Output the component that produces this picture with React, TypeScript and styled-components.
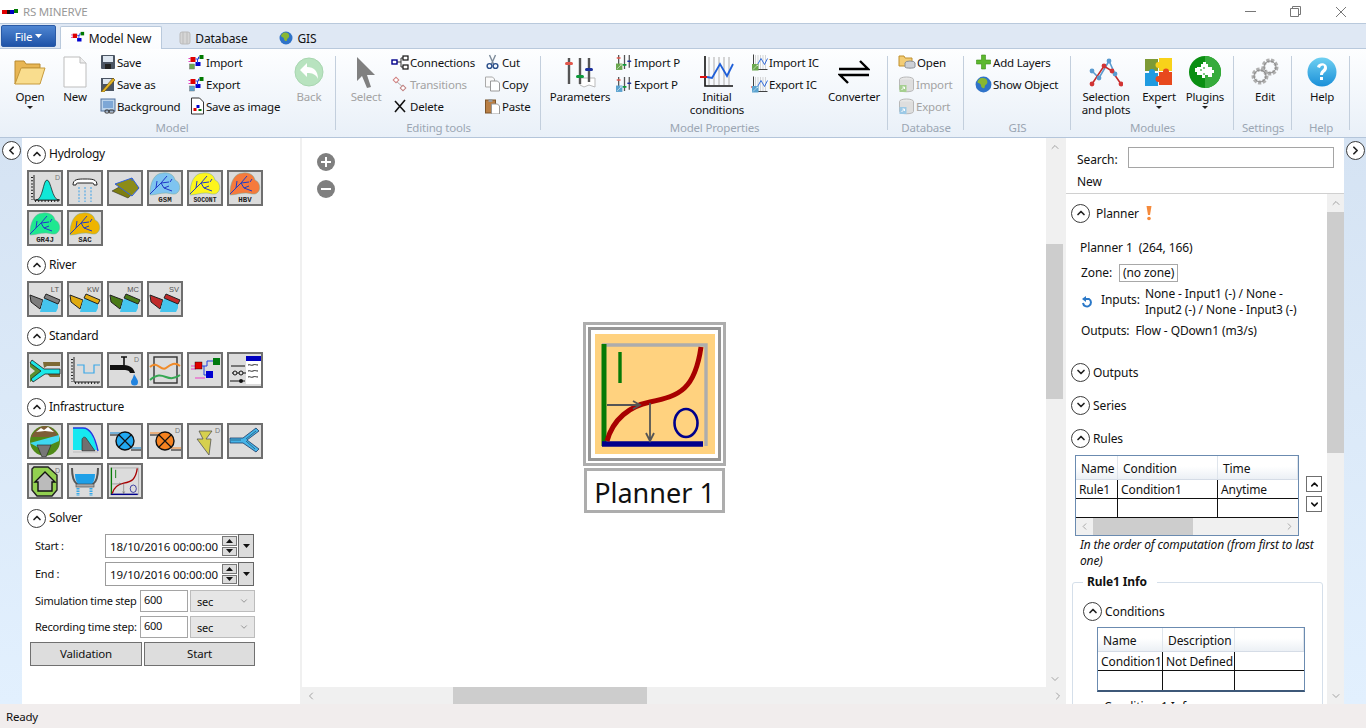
import React from 'react';
import styled, { createGlobalStyle } from 'styled-components';
import { ChevronUp, ChevronDown, ChevronLeft, ChevronRight } from 'lucide-react';

const GlobalStyle = createGlobalStyle`
  html, body { margin: 0; padding: 0; overflow: hidden; background: #fff; }
  * { box-sizing: border-box; }
  body { font-family: "Noto Sans", "Open Sans", sans-serif; font-size: 11.5px; letter-spacing: -0.2px; color: #111; }
`;

const Window = styled.div`
  width: 1366px;
  height: 728px;
  display: flex;
  flex-direction: column;
  overflow: hidden;
`;

/* title bar */
const TitleBar = styled.div`
  height: 24px;
  flex: none;
  display: flex;
  align-items: center;
  padding-left: 2px;
  background: #fff;
  border-bottom: 1px solid #b9c9dc;
`;
const AppName = styled.span`
  margin-left: 5px;
  color: #999;
`;
const WindowControls = styled.div`
  margin-left: auto;
  display: flex;
  align-items: center;
  padding-right: 19px;
  gap: 34px;
`;

/* tabs */
const TabStrip = styled.div`
  height: 24px;
  flex: none;
  display: flex;
  align-items: flex-end;
  background: #dfe8f4;
  padding-left: 1px;
`;
const FileButton = styled.div`
  width: 55px;
  height: 22px;
  align-self: flex-start;
  margin-top: 1px;
  display: flex;
  align-items: center;
  justify-content: center;
  gap: 3px;
  border-radius: 2px;
  border: 1px solid #2a5aa5;
  background: linear-gradient(#4f86d2, #1e53a8);
  color: #fff;
`;
const Tab = styled.div<{ $active?: boolean; $w: number; $ml?: number }>`
  width: ${p => p.$w}px;
  margin-left: ${p => p.$ml ?? 0}px;
  height: 23px;
  display: flex;
  align-items: center;
  justify-content: center;
  gap: 4px;
  font-size: 12px;
  letter-spacing: -0.1px;
  margin-bottom: -1px;
  position: relative;
  background: ${p => (p.$active ? 'linear-gradient(#fff, #fbfcfe)' : 'transparent')};
  border: 1px solid ${p => (p.$active ? '#b9c9dc' : 'transparent')};
  border-bottom: none;
  border-radius: 2px 2px 0 0;
`;

/* ribbon */
const Ribbon = styled.div`
  height: 90px;
  flex: none;
  display: flex;
  padding-left: 8px;
  background: linear-gradient(#fdfeff, #e9f0f8);
  border-top: 1px solid #b9c9dc;
  border-bottom: 1px solid #b4c5da;
`;
const Group = styled.div<{ $w: number }>`
  width: ${p => p.$w}px;
  flex: none;
  display: flex;
  flex-direction: column;
  position: relative;
  &::after {
    content: '';
    position: absolute;
    right: 0;
    top: 7px;
    bottom: 7px;
    width: 1px;
    background: #c3cfdd;
  }
`;
const GroupBody = styled.div`
  flex: 1;
  display: flex;
  align-items: flex-start;
`;
const GroupLabel = styled.div`
  height: 18px;
  line-height: 18px;
  text-align: center;
  color: #9ba6b3;
`;
const Large = styled.div<{ $w: number; $off?: boolean; $ml?: number }>`
  width: ${p => p.$w}px;
  margin-left: ${p => p.$ml ?? 0}px;
  flex: none;
  display: flex;
  flex-direction: column;
  align-items: center;
  padding-top: 5px;
  line-height: 13px;
  text-align: center;
  color: ${p => (p.$off ? '#a3a3a3' : '#111')};
`;
const LargeIcon = styled.div`
  height: 35px;
  margin-bottom: 1px;
  display: flex;
  align-items: center;
  justify-content: center;
`;
const Caret = styled.div`
  width: 0;
  height: 0;
  margin-top: 3px;
  border-left: 3px solid transparent;
  border-right: 3px solid transparent;
  border-top: 3px solid #222;
`;
const SmallColumn = styled.div<{ $w: number; $ml?: number }>`
  width: ${p => p.$w}px;
  margin-left: ${p => p.$ml ?? 0}px;
  flex: none;
  display: flex;
  flex-direction: column;
  padding-top: 2px;
`;
const Small = styled.div<{ $off?: boolean }>`
  height: 22px;
  display: flex;
  align-items: center;
  gap: 1px;
  white-space: nowrap;
  color: ${p => (p.$off ? '#a3a3a3' : '#111')};
`;

/* main */
const Main = styled.div`
  flex: 1;
  min-height: 0;
  display: flex;
`;
const Rail = styled.div`
  width: 22px;
  flex: none;
  padding-top: 3px;
  display: flex;
  justify-content: center;
  background: linear-gradient(#d5e3f3, #e2f0fe);
`;
const RoundButton = styled.div<{ $size?: number }>`
  width: ${p => p.$size ?? 19}px;
  height: ${p => p.$size ?? 19}px;
  flex: none;
  border-radius: 50%;
  border: 1.5px solid #3c3c3c;
  background: #fff;
  display: flex;
  align-items: center;
  justify-content: center;
  color: #222;
`;
const LeftPanel = styled.div`
  width: 278px;
  flex: none;
  padding: 6px 0 0 5px;
  background: #fff;
  overflow: hidden;
`;
const Splitter = styled.div`
  width: 2px;
  flex: none;
  background: #f0f0f0;
`;
const SectionHead = styled.div`
  height: 20px;
  display: flex;
  align-items: center;
  gap: 3px;
  margin-bottom: 6px;
  font-size: 12px;
  letter-spacing: -0.25px;
`;
const SectionTitle = styled.span`
  margin-bottom: 2px;
`;
const Tiles = styled.div`
  width: 240px;
  display: flex;
  flex-wrap: wrap;
  gap: 4px;
  margin-bottom: 9px;
`;
const Tile = styled.div`
  width: 36px;
  height: 36px;
  border: 2px solid #6f6f6f;
  background: #dcdcdc;
  display: flex;
  align-items: center;
  justify-content: center;
`;

/* solver */
const SolverRow = styled.div<{ $h: number }>`
  height: ${p => p.$h}px;
  width: 228px;
  margin-left: 8px;
  margin-bottom: 4px;
  display: flex;
  align-items: center;
  font-size: 11px;
  letter-spacing: -0.25px;
`;
const RowLabel = styled.span<{ $w: number }>`
  width: ${p => p.$w}px;
  flex: none;
  margin-bottom: 2px;
  white-space: nowrap;
`;
const DateBox = styled.div`
  width: 116px;
  height: 24px;
  flex: none;
  border: 1px solid #9c9c9c;
  border-right: none;
  display: flex;
  align-items: center;
  padding-left: 4px;
  white-space: nowrap;
  overflow: hidden;
  font-size: 11.5px;
  letter-spacing: -0.1px;
`;
const Spin = styled.div`
  width: 17px;
  height: 24px;
  flex: none;
  display: flex;
  flex-direction: column;
  gap: 1px;
  padding: 1px;
  border-top: 1px solid #9c9c9c;
  border-bottom: 1px solid #9c9c9c;
`;
const SpinPart = styled.div`
  flex: 1;
  background: #dcdcdc;
  border: 1px solid #777;
  display: flex;
  align-items: center;
  justify-content: center;
`;
const DropPart = styled.div`
  width: 16px;
  height: 24px;
  flex: none;
  background: #dcdcdc;
  border: 1px solid #666;
  display: flex;
  align-items: center;
  justify-content: center;
`;
const NumberBox = styled.div`
  width: 48px;
  height: 22px;
  flex: none;
  border: 1px solid #a5a5a5;
  padding-left: 3px;
  line-height: 18px;
`;
const UnitSelect = styled.div`
  width: 65px;
  height: 22px;
  flex: none;
  margin-left: 2px;
  border: 1px solid #bcbcbc;
  background: #e6e6e6;
  display: flex;
  align-items: center;
  justify-content: space-between;
  padding: 0 5px 0 6px;
`;
const SolverButtons = styled.div`
  display: flex;
  gap: 2px;
  margin-left: 3px;
`;
const SolverButton = styled.div<{ $w: number }>`
  width: ${p => p.$w}px;
  height: 24px;
  padding-bottom: 2px;
  border: 1px solid #707070;
  background: #dddddd;
  display: flex;
  align-items: center;
  justify-content: center;
`;

/* canvas */
const CanvasColumn = styled.div`
  width: 764px;
  flex: none;
  display: flex;
  flex-direction: column;
`;
const CanvasRow = styled.div`
  flex: 1;
  min-height: 0;
  display: flex;
`;
const Canvas = styled.div`
  flex: 1;
  position: relative;
  background: #fff;
  overflow: hidden;
`;
const ZoomButton = styled.div<{ $top: number }>`
  position: absolute;
  left: 15px;
  top: ${p => p.$top}px;
  width: 18px;
  height: 18px;
  border-radius: 50%;
  background: #7f7f7f;
  color: #fff;
  display: flex;
  align-items: center;
  justify-content: center;
`;
const NodeFrame = styled.div`
  position: absolute;
  left: 281px;
  top: 184px;
  width: 143px;
  height: 144px;
  border: 3px solid #adadad;
  padding: 2px;
`;
const NodeInner = styled.div`
  width: 100%;
  height: 100%;
  border: 3px solid #969696;
  padding: 4px 3px 3px 4px;
`;
const NodeLabel = styled.div`
  position: absolute;
  left: 282px;
  top: 330px;
  width: 141px;
  height: 45px;
  border: 3px solid #adadad;
  padding-top: 3px;
  display: flex;
  align-items: center;
  justify-content: center;
  font-size: 27px;
  letter-spacing: 0;
  white-space: nowrap;
  color: #111;
`;

/* scrollbars */
const VTrack = styled.div<{ $gutter?: number }>`
  width: ${p => 17 + (p.$gutter ?? 0)}px;
  flex: none;
  display: flex;
  flex-direction: column;
  background: #f0f0f0;
  padding-right: ${p => p.$gutter ?? 0}px;
  color: #a3a3a3;
`;
const VThumb = styled.div<{ $top: number; $h: number }>`
  width: 17px;
  height: ${p => p.$h}px;
  margin-top: ${p => p.$top}px;
  background: #cdcdcd;
`;
const BarArrow = styled.div<{ $end?: boolean }>`
  width: 17px;
  height: 17px;
  flex: none;
  margin-top: ${p => (p.$end ? 'auto' : '0')};
  display: flex;
  align-items: center;
  justify-content: center;
`;
const HTrack = styled.div<{ $h?: number }>`
  height: ${p => p.$h ?? 17}px;
  flex: none;
  display: flex;
  align-items: center;
  background: #f0f0f0;
  color: #a3a3a3;
`;
const HThumb = styled.div<{ $left: number; $w: number }>`
  width: ${p => p.$w}px;
  height: 100%;
  margin-left: ${p => p.$left}px;
  background: #cdcdcd;
`;
const HEndArrow = styled.div`
  width: 17px;
  height: 17px;
  flex: none;
  margin-left: auto;
  display: flex;
  align-items: center;
  justify-content: center;
`;

/* properties panel */
const RightPanel = styled.div`
  width: 278px;
  flex: none;
  display: flex;
  flex-direction: column;
  background: #fff;
  min-height: 0;
  font-size: 12px;
  letter-spacing: -0.1px;
`;
const PanelTop = styled.div`
  height: 56px;
  flex: none;
  padding: 9px 10px 0 11px;
  border-bottom: 1px solid #d0d0d0;
`;
const SearchRow = styled.div`
  display: flex;
  align-items: center;
  height: 21px;
  justify-content: space-between;
`;
const SearchLabel = styled.span`
  padding-top: 3px;
`;
const SearchInput = styled.div`
  width: 206px;
  height: 21px;
  border: 1px solid #a5a5a5;
`;
const NewLabel = styled.div`
  margin-top: 6px;
  line-height: 16px;
`;
const PanelBody = styled.div`
  flex: 1;
  min-height: 0;
  display: flex;
`;
const PanelScroll = styled.div`
  flex: 1;
  min-width: 0;
  overflow: hidden;
  padding: 9px 4px 0 5px;
`;
const PanelHead = styled.div<{ $mt?: number; $gap?: number }>`
  height: 20px;
  margin-top: ${p => p.$mt ?? 0}px;
  display: flex;
  align-items: center;
  gap: ${p => p.$gap ?? 5}px;
`;
const InfoLine = styled.div<{ $mt: number; $ml?: number }>`
  margin-top: ${p => p.$mt}px;
  margin-left: ${p => p.$ml ?? 9}px;
  display: flex;
  align-items: center;
  line-height: 16px;
  white-space: nowrap;
`;
const ZoneBox = styled.span`
  height: 18px;
  margin-left: 7px;
  padding: 0 3px;
  border: 1px solid #a8a8a8;
  line-height: 15px;
`;
const InputsIcon = styled.svg`
  margin-right: 8px;
`;
const InputsLabel = styled.span`
  margin-bottom: 4px;
`;
const InputsValue = styled.div`
  width: 165px;
  margin-left: 5px;
  white-space: normal;
`;
const TableRow = styled.div`
  display: flex;
  align-items: flex-start;
  margin-top: 7px;
  margin-left: 4px;
`;
const Grid = styled.div<{ $w: number; $thick?: boolean }>`
  width: ${p => p.$w}px;
  flex: none;
  border: 1px solid #6b8bb0;
  border-bottom: ${p => (p.$thick ? '2px solid #3d5878' : '1px solid #6b8bb0')};
`;
const GridRow = styled.div<{ $cols: string; $h: number; $head?: boolean }>`
  height: ${p => p.$h}px;
  display: grid;
  grid-template-columns: ${p => p.$cols};
  background: ${p => (p.$head ? 'linear-gradient(#fff, #fff 45%, #ecf0f5)' : '#fff')};
  border-bottom: 1px solid ${p => (p.$head ? '#d5dce6' : '#111')};
  &:last-child { border-bottom: none; }
`;
const HeadCell = styled.div`
  display: flex;
  align-items: center;
  padding: 1px 0 0 5px;
  border-right: 1px solid #dfe5ec;
  white-space: nowrap;
  overflow: hidden;
`;
const DataCell = styled.div`
  display: flex;
  align-items: center;
  padding-left: 3px;
  border-right: 1px solid #111;
  white-space: nowrap;
  overflow: hidden;
  &:last-child { border-right: none; }
`;
const MoveButtons = styled.div`
  margin: 21px 0 0 7px;
  display: flex;
  flex-direction: column;
  gap: 4px;
`;
const MoveButton = styled.div`
  width: 16px;
  height: 16px;
  border: 1px solid #6f6f6f;
  display: flex;
  align-items: center;
  justify-content: center;
`;
const Caption = styled.div`
  margin: 1px 6px 0 9px;
  font-style: italic;
  line-height: 16px;
  letter-spacing: -0.15px;
`;
const FieldSet = styled.fieldset`
  margin: 5px 0 0 1px;
  padding: 0 0 0 10px;
  border: 1px solid #d5dfea;
  border-radius: 3px;
  height: 160px;
`;
const Legend = styled.legend`
  margin-left: 0;
  padding: 0 10px 0 4px;
  font-weight: 700;
  line-height: 16px;
`;
const ConditionTable = styled.div`
  margin: 6px 0 0 14px;
`;
const ClippedTitle = styled.div`
  margin: 6px 0 0 21px;
`;

const StatusBar = styled.div`
  height: 24px;
  flex: none;
  display: flex;
  align-items: center;
  padding-left: 6px;
  background: #f1eded;
`;

/* ---- drawings ---- */
type IconProps = { s?: number };

const FlowMark: React.FC<{ w?: number; h?: number; badge?: string }> = ({ w = 17, h = 16, badge }) => (
  <svg width={w} height={h} viewBox="0 0 16 16">
    <rect x="0" y="4" width="2" height="1" fill="#e040c0" />
    <rect x="0" y="7" width="2" height="1" fill="#e040c0" />
    <rect x="2" y="3" width="5" height="5" fill="#e00000" />
    <rect x="7" y="8" width="5" height="4" fill="#0000d0" />
    <rect x="11" y="1" width="4" height="4" fill="#007a00" />
    <path d="M7 5h3V3h1M9 5v4" stroke="#2040e0" fill="none" />
    {badge && <rect x="1" y="10" width="5" height="5" fill={badge} stroke="#777" strokeWidth=".5" />}
  </svg>
);

const ArrowBadge: React.FC<{ x?: number; y?: number; color: string; s?: number }> = ({ x = 0, y = 0, color, s = 8 }) => (
  <g transform={`translate(${x} ${y})`}>
    <rect width={s} height={s} fill={color} />
    <path d={`M2 ${s - 2}L${s - 2} 2M${s - 4} 2h2v2`} stroke="#fff" fill="none" />
  </g>
);

const FolderLarge = () => (
  <svg width="32" height="28" viewBox="0 0 32 28">
    <path d="M1 26V3h9l2 3h14v4H8L1 26z" fill="#e8b654" stroke="#b88a30" />
    <path d="M1 26l6-16h24l-5 16z" fill="#f9dd8e" stroke="#c79a3c" />
  </svg>
);
const PageLarge = () => (
  <svg width="24" height="32" viewBox="0 0 24 32">
    <path d="M1 1h16l6 6v24H1z" fill="#fff" stroke="#bdbdbd" />
    <path d="M17 1v6h6" fill="#eee" stroke="#bdbdbd" />
  </svg>
);
const Floppy = () => (
  <svg width="16" height="16" viewBox="0 0 16 16">
    <rect x="1" y="1" width="14" height="14" rx="1" fill="#4b5563" />
    <rect x="3" y="2" width="10" height="6" fill="#dde6f0" />
    <rect x="5" y="10" width="6" height="5" fill="#222" />
  </svg>
);
const FloppyPen = () => (
  <svg width="16" height="16" viewBox="0 0 16 16">
    <rect x="1" y="2" width="13" height="13" fill="#4b5563" />
    <rect x="3" y="3" width="9" height="5" fill="#dde6f0" />
    <path d="M1 16L13 2l2 2L4 16z" fill="#e4b526" stroke="#6a4e00" strokeWidth=".6" />
  </svg>
);
const Picture = () => (
  <svg width="16" height="16" viewBox="0 0 16 16">
    <rect x="1" y="1" width="14" height="12" fill="#bcd4ec" stroke="#50719b" />
    <rect x="3" y="3" width="10" height="7" fill="#7da7d6" />
    <rect x="5" y="12" width="4" height="3" rx="1" fill="none" stroke="#333" />
    <rect x="9" y="12" width="5" height="3" rx="1" fill="none" stroke="#333" />
  </svg>
);
const ImagePage = () => (
  <svg width="17" height="18" viewBox="0 0 16 18">
    <path d="M3 1h8l4 4v12H3z" fill="#fff" stroke="#333" />
    <rect x="5" y="11" width="3" height="3" fill="#d00" />
    <rect x="8" y="8" width="3" height="3" fill="#00c" />
    <rect x="10" y="12" width="3" height="2" fill="#070" />
  </svg>
);
const BackCircle = () => (
  <svg width="30" height="30" viewBox="0 0 30 30">
    <circle cx="15" cy="15" r="14" fill="#b8e3bf" stroke="#a8d6b0" />
    <path d="M6 13l7-7v4c7 0 11 4 11 12-2-5-6-6-11-6v4z" fill="#fff" />
  </svg>
);
const Pointer = () => (
  <svg width="22" height="32" viewBox="0 0 22 32">
    <path d="M2 1l18 18h-8l4 12-4 1-5-12-5 5z" fill="#808080" />
  </svg>
);
const Connections = () => (
  <svg width="18" height="16" viewBox="0 0 18 16">
    <path d="M6 8h4M10 4v9M10 4h2M10 13h2" stroke="#333" fill="none" />
    <rect x="1" y="6" width="5" height="4" fill="#fff" stroke="#00008b" strokeWidth="1.4" />
    <rect x="12" y="2" width="5" height="4" fill="#fff" stroke="#111" strokeWidth="1.2" />
    <rect x="12" y="11" width="5" height="4" fill="#fff" stroke="#111" strokeWidth="1.2" />
  </svg>
);
const Transitions = () => (
  <svg width="18" height="16" viewBox="0 0 16 16">
    <path d="M4 5l8 7" stroke="#aaa" />
    <rect x="2" y="2" width="4" height="4" fill="#fff" stroke="#d08080" transform="rotate(45 4 4)" />
    <rect x="9" y="10" width="4" height="4" fill="#fff" stroke="#c08080" transform="rotate(45 11 12)" />
  </svg>
);
const DeleteX = () => (
  <svg width="18" height="16" viewBox="0 0 16 16">
    <path d="M3 3l10 11M13 2L3 14" stroke="#111" strokeWidth="1.6" />
  </svg>
);
const Scissors = () => (
  <svg width="17" height="16" viewBox="0 0 16 16">
    <path d="M5 1l4 9M11 1L7 10" stroke="#7c8a99" strokeWidth="1.4" />
    <circle cx="5" cy="12" r="2.4" fill="none" stroke="#2b4f8a" strokeWidth="1.4" />
    <circle cx="11" cy="12" r="2.4" fill="none" stroke="#2b4f8a" strokeWidth="1.4" />
  </svg>
);
const CopyPages = () => (
  <svg width="17" height="16" viewBox="0 0 16 16">
    <path d="M1 1h7l2 2v8H1z" fill="#fafafa" stroke="#aaa" />
    <path d="M6 5h7l2 2v8H6z" fill="#fff" stroke="#999" />
  </svg>
);
const PasteBoard = () => (
  <svg width="17" height="16" viewBox="0 0 16 16">
    <rect x="1" y="2" width="10" height="13" fill="#b97f45" stroke="#7d5428" />
    <rect x="4" y="1" width="4" height="3" fill="#999" />
    <path d="M7 6h6l2 2v8H7z" fill="#fff" stroke="#999" />
  </svg>
);
const Sliders: React.FC<{ s?: number; badge?: string; paper?: boolean }> = ({ s = 32, badge, paper }) => (
  <svg width={s} height={s} viewBox="0 0 32 32">
    {paper && <path d="M16 22h15v9l-6-2-5 2-4-2z" fill="#fff" stroke="#bbb" />}
    <g stroke="#555" strokeWidth="2.4">
      <path d="M5 2v26M16 2v26M25 2v24" />
    </g>
    <rect x="1" y="6" width="8" height="3" rx="1.5" fill="#e2574c" />
    <rect x="12" y="19" width="8" height="3" rx="1.5" fill="#0b9a3a" />
    <rect x="21" y="12" width="8" height="3" rx="1.5" fill="#1a2f9c" />
    {badge && <ArrowBadge y={18} color={badge} s={12} />}
  </svg>
);
const AxisChart: React.FC<{ s?: number; red?: boolean; badge?: string }> = ({ s = 34, red, badge }) => (
  <svg width={s} height={s} viewBox="0 0 34 34">
    <g stroke="#c4c4c4" strokeWidth="1.4">
      <path d="M9 2v28M14 2v28M19 2v28M24 2v28M29 2v28" />
    </g>
    <path d="M5 1v30h28" fill="none" stroke="#111" strokeWidth="1.6" />
    {red && <path d="M0 22h7" stroke="#e01010" strokeWidth="2" />}
    <path d="M7 22l5 1 8-14 7 12 6-12" fill="none" stroke="#1f5fd8" strokeWidth="1.8" />
    {badge && <ArrowBadge x={2} y={20} color={badge} s={13} />}
  </svg>
);
const ConverterArrows = () => (
  <svg width="32" height="26" viewBox="0 0 32 26">
    <path d="M1 10h29L22 2M31 16H2l8 8" fill="none" stroke="#000" strokeWidth="2.4" />
  </svg>
);
const FolderDb = () => (
  <svg width="18" height="16" viewBox="0 0 18 16">
    <path d="M1 2h5l1 2h7v8H1z" fill="#f3cd75" stroke="#c0902f" />
    <ellipse cx="12" cy="9" rx="5" ry="2" fill="#ccd0d6" stroke="#8a8f96" />
    <path d="M7 9v4c0 1.5 10 1.5 10 0V9" fill="#ccd0d6" stroke="#8a8f96" />
  </svg>
);
const DbBadge: React.FC<{ color: string }> = ({ color }) => (
  <svg width="17" height="17" viewBox="0 0 16 17">
    <ellipse cx="8" cy="3.5" rx="7" ry="2.5" fill="#e8e8e8" stroke="#b8b8b8" />
    <path d="M1 3.5v10c0 3 14 3 14 0v-10" fill="#dedede" stroke="#b8b8b8" />
    <ArrowBadge x={1} y={9} color={color} s={7} />
  </svg>
);
const Cross = () => (
  <svg width="17" height="16" viewBox="0 0 16 16">
    <path d="M6 1h4v5h5v4h-5v5H6v-5H1V6h5z" fill="#5cb82e" stroke="#3c8f1a" strokeWidth=".6" />
  </svg>
);
const Globe: React.FC<IconProps> = ({ s = 14 }) => (
  <svg width={s} height={s} viewBox="0 0 14 14">
    <circle cx="7" cy="7" r="6.5" fill="#2f73c9" />
    <path d="M4 2c3-1 6 0 6 2 1 3-2 3-2 5s-3 1-3-1-3-2-3-3 1-2 2-3z" fill="#89b733" />
  </svg>
);
const Graph = () => (
  <svg width="34" height="30" viewBox="0 0 34 30">
    <path d="M3 14l7 7 10-17 6 13" fill="none" stroke="#5a9bd0" strokeWidth="1.6" />
    <path d="M3 27l12-18 8 5 9 13" fill="none" stroke="#c32a2a" strokeWidth="1.6" />
    {[[3, 14], [10, 21], [20, 4], [26, 17]].map(([x, y]) => <circle key={`${x}${y}`} cx={x} cy={y} r="2.4" fill="#5a9bd0" />)}
    {[[3, 27], [15, 9], [23, 14], [32, 27]].map(([x, y]) => <circle key={`${x}${y}`} cx={x} cy={y} r="2.4" fill="#d13434" />)}
  </svg>
);
const Puzzle = () => (
  <svg width="30" height="30" viewBox="0 0 30 30">
    <rect x="1" y="2" width="13" height="12" fill="#7d9a36" />
    <rect x="15" y="1" width="13" height="13" fill="#f8d21a" />
    <rect x="1" y="16" width="13" height="13" fill="#1f9be0" />
    <rect x="15" y="15" width="13" height="13" fill="#e8491d" />
    <circle cx="14.5" cy="8" r="3" fill="#f8d21a" />
    <circle cx="8" cy="15" r="3" fill="#1f9be0" />
    <circle cx="22" cy="14.5" r="3" fill="#e8491d" />
    <circle cx="14.5" cy="22" r="3" fill="#e8491d" />
  </svg>
);
const PluginBall = () => (
  <svg width="32" height="32" viewBox="0 0 32 32">
    <circle cx="16" cy="16" r="16" fill="#0a8f12" />
    <path d="M16 0a16 16 0 0 1 0 32z" fill="#36ab3b" />
    <path d="M8 11h4V8h2V6h3v2h2v3h4v3h2v3h-2v4h-4v-2h-3v3h-3v-3H8v-3H6v-4h2z" fill="#fff" />
    <path d="M15 11v2M15 17v2M11 14h2" stroke="#0a8f12" />
  </svg>
);
const Gears = () => (
  <svg width="30" height="30" viewBox="0 0 30 30">
    <circle cx="20" cy="10" r="6.5" fill="none" stroke="#b0b0b0" strokeWidth="4" strokeDasharray="3 1.4" />
    <circle cx="20" cy="10" r="6" fill="none" stroke="#888" strokeWidth="1" />
    <circle cx="10" cy="19" r="6.5" fill="none" stroke="#b0b0b0" strokeWidth="4" strokeDasharray="3 1.4" />
    <circle cx="10" cy="19" r="6" fill="none" stroke="#888" strokeWidth="1" />
  </svg>
);
const HelpBall = () => (
  <svg width="30" height="30" viewBox="0 0 30 30">
    <defs>
      <linearGradient id="helpFill" x1="0" y1="0" x2="0" y2="1">
        <stop offset="0" stopColor="#6fd0f2" />
        <stop offset="1" stopColor="#1a8fd8" />
      </linearGradient>
    </defs>
    <circle cx="15" cy="15" r="14.5" fill="url(#helpFill)" />
    <path d="M10 10c1-5 10-5 10 1 0 4-4 4-4 7h-3c0-5 4-5 4-8 0-2-3-2-4 1z" fill="#fff" />
    <rect x="13" y="20" width="3" height="3" fill="#fff" />
  </svg>
);
const Mini: React.FC<{ d: string; fill: string }> = ({ d, fill }) => (
  <svg width="7" height="4" viewBox="0 0 7 4"><path d={d} fill={fill} /></svg>
);

/* palette tiles, 32px */
const Tag: React.FC<{ x?: number; y?: number; t: string; size?: number; color?: string; anchor?: 'middle' | 'end'; mono?: boolean }> = ({ x = 29, y = 8, t, size = 7, color = '#777', anchor = 'end', mono }) => (
  <text x={x} y={y} fontSize={size} letterSpacing="0" fontFamily={mono ? 'Liberation Mono, monospace' : 'Liberation Sans, sans-serif'} fontWeight={mono ? 700 : 400} fill={color} textAnchor={anchor}>{t}</text>
);
const T: React.FC<{ children: React.ReactNode }> = ({ children }) => (
  <svg width="32" height="32" viewBox="0 0 32 32">{children}</svg>
);
const Axes: React.FC<{ top?: number }> = ({ top = 3 }) => (
  <>
    <path d={`M5 ${top}v25h26`} fill="none" stroke="#222" />
    <path d={`M3 ${top + 2}v23M6 29h25`} fill="none" stroke="#222" strokeWidth="2" strokeDasharray="1 2.2" />
  </>
);
const Leaf: React.FC<{ fill: string; label: string }> = ({ fill, label }) => (
  <T>
    <path d="M1 22C1 11 5 1 14 1c6-1 11 2 12 7 5 2 6 9 3 12-3 4-8 1-12 1-6 0-11 2-16 2z" fill={fill} stroke="#7a9" strokeWidth=".5" />
    <path d="M1 22L12 11l6-7M12 11l3 5 8 3M7 16l1-7M12 11l8-1M15 16l5-2M21 10l2-3" fill="none" stroke="#2038c8" strokeWidth="1" />
    <Tag x={16} y={30} t={label} size={label.length > 4 ? 6.4 : 7.4} color="#222" anchor="middle" mono />
  </T>
);
const RiverTile: React.FC<{ wing: string; label: string }> = ({ wing, label }) => (
  <T>
    <path d="M1 12l13 5-3 9-9-7z" fill={wing} stroke="#222" />
    <path d="M14 17l4-2 11 6v4l-2 4H11z" fill="#45c4ee" />
    <path d="M17 11l14 6-2 4-14-6z" fill={wing} stroke="#222" />
    <Tag x={30} y={9} t={label} size={7.5} color="#555" />
  </T>
);
const Junction = () => (
  <T>
    <path d="M1 8l9 3 5 6-5 5-9 6V21l5-4-5-4z" fill="#5a8f2e" />
    <path d="M14 8h17v4H18l-3 2zM16 17h15v6H21z" fill="#7d6a34" />
    <path d="M3 6l12 9h16v5H16L4 28 2 25l10-8L1 9z" fill="#1ce8e8" stroke="#222" strokeWidth=".8" />
  </T>
);
const Sink = () => (
  <T>
    <Axes />
    <path d="M8 11h7v8h10v-8h6" fill="none" stroke="#3ba8e8" strokeWidth="1.2" />
  </T>
);
const Tap = () => (
  <T>
    <path d="M1 11h12c6 0 11 1 13 8h-5c-1-3-3-3-8-3H1z" fill="#111" />
    <path d="M12 3h6M15 3v8" stroke="#111" strokeWidth="1.6" />
    <path d="M25 20c3 5 4 6 4 8a3.5 3.5 0 0 1-7 0c0-2 2-3 3-8z" fill="#2284e0" />
    <Tag t="D" size={7} x={30} />
  </T>
);
const SeriesBox = () => (
  <T>
    <rect x="5" y="3" width="23" height="26" fill="none" stroke="#333" strokeWidth="1.4" />
    <path d="M1 13c7-7 11 5 16 1s9-6 14-2" fill="none" stroke="#f08a28" strokeWidth="2" />
    <path d="M1 26c7-6 11-5 16-3s9 2 14-2" fill="none" stroke="#35a853" strokeWidth="2" />
  </T>
);
const FlowTile = () => (
  <T>
    <path d="M2 12h5M2 15h5M6 24h10" stroke="#ee40c8" strokeWidth="1" />
    <rect x="6" y="8" width="7" height="7" fill="#e00000" stroke="#000" strokeWidth=".4" />
    <rect x="17" y="17" width="7" height="7" fill="#0000d0" />
    <rect x="24" y="4" width="7" height="7" fill="#007a10" />
    <path d="M13 12h5V7h6M15 12v9h2" fill="none" stroke="#2040e0" />
  </T>
);
const TableTile = () => (
  <T>
    <rect x="17" y="2" width="15" height="28" fill="#fff" />
    <rect x="17" y="2" width="15" height="5" fill="#0000c0" />
    <path d="M19 11c2-1 3 1 5 0s3 0 5 0M19 17c2-1 3 1 5 0s3 0 5 0M19 23c2-1 3 1 5 0s3 0 5 0" fill="none" stroke="#222" />
    <path d="M2 12h14M3 19h14M1 27h15" stroke="#111" />
    <circle cx="6" cy="19" r="2" fill="#dcdcdc" stroke="#111" />
    <circle cx="12" cy="19" r="2" fill="#dcdcdc" stroke="#111" />
    <circle cx="12" cy="27" r="2" fill="#111" />
  </T>
);
const Reservoir = () => (
  <T>
    <circle cx="16" cy="16" r="15" fill="#4f8a18" />
    <path d="M2 12C6 5 11 1 16 1s10 4 14 11z" fill="#7d5d36" />
    <path d="M7 7l5-4 3 2 4-3 6 5-9-1z" fill="#fff" />
    <path d="M1 18l29-8v6L12 24z" fill="#3fd8f0" />
    <path d="M8 20h14l-5 12h-4z" fill="#777" stroke="#222" strokeWidth=".6" />
  </T>
);
const Weir = () => (
  <T>
    <path d="M4 3h10c6 0 11 8 14 22H4z" fill="#16e8f0" />
    <path d="M4 3h10c7 0 12 9 15 23" fill="none" stroke="#2038e0" strokeWidth="1.4" />
    <path d="M13 26V15c0-2 2-4 4-2l9 13z" fill="#707070" stroke="#222" strokeWidth=".6" />
    <path d="M4 27h25" stroke="#bbb" />
  </T>
);
const Turbine: React.FC<{ fill: string; d?: boolean; line: string }> = ({ fill, d, line }) => (
  <T>
    <path d="M1 8h10M22 23h10" stroke={line} strokeWidth="1" />
    <path d="M1 10h10M22 25h10" stroke="#111" strokeWidth="1.2" />
    <circle cx="16" cy="16" r="9" fill={fill} stroke="#111" strokeWidth="1.4" />
    <path d="M10 10l12 12M22 10L10 22" stroke="#111" strokeWidth="1.2" />
    {d && <Tag t="D" x={31} y={8} />}
  </T>
);
const Bolt = () => (
  <T>
    <path d="M10 6l13 0-6 8 5 0-2 16-12-16h6z" fill="#d6d04e" stroke="#555" strokeWidth=".8" />
    <Tag t="D" x={31} y={8} />
  </T>
);
const Split = () => (
  <T>
    <path d="M1 13h13L27 3l3 3-12 9 12 9-3 3-13-9H1z" fill="#45b4e8" stroke="#1a3a66" strokeWidth=".8" />
    <path d="M2 15h10M17 14L27 6M17 16l9 8" stroke="#123" strokeWidth=".5" />
  </T>
);
const HouseTile = () => (
  <T>
    <path d="M5 2h14l9 8v15l-5 6H8l-5-6V4z" fill="#92d050" stroke="#222" strokeWidth="1.4" />
    <path d="M16 7L6 17h3v9h14v-9h3z" fill="#bbb" stroke="#111" strokeWidth="1.4" />
    <Tag t="D" x={31} y={8} />
  </T>
);
const Basin = () => (
  <T>
    <path d="M3 3c0 10 2 14 5 16h16c3-2 5-6 5-16" fill="none" stroke="#555" strokeWidth="2" />
    <path d="M6 9h20c0 4-1 8-3 10H9C7 17 6 13 6 9z" fill="#1fa0e8" />
    <rect x="7" y="19" width="18" height="3" fill="#aaa" stroke="#444" strokeWidth=".6" />
    <path d="M9 23v8M22 23v8" stroke="#35a8e8" strokeWidth="3" strokeDasharray="1.5 1" />
  </T>
);
const PlannerDrawing: React.FC<{ s: number; bg?: string }> = ({ s, bg = '#ffd27f' }) => (
  <svg width={s} height={s} viewBox="0 0 120 120">
    <rect width="120" height="120" fill={bg} />
    <path d="M7 11h104v101" fill="none" stroke="#adadad" strokeWidth="3.4" />
    <path d="M9 10v102" stroke="#067a06" strokeWidth="5" />
    <path d="M7 110h101" stroke="#00008b" strokeWidth="5.4" />
    <path d="M25 18v31" stroke="#067a06" strokeWidth="3.4" />
    <path d="M12 107C18 85 35 72 55 68 85 62 100 55 106 13" fill="none" stroke="#a80000" strokeWidth="5" />
    <path d="M12 71h32M38 67l7 4-7 4M55 69v37M51 99l4 8 4-8" fill="none" stroke="#555" strokeWidth="1.8" />
    <ellipse cx="91" cy="89" rx="11.5" ry="14" fill="none" stroke="#00008b" strokeWidth="2.6" />
  </svg>
);

const ChevUp: React.FC<{ s?: number }> = ({ s = 12 }) => <ChevronUp size={s} strokeWidth={3.4} />;
const ChevDown: React.FC<{ s?: number }> = ({ s = 12 }) => <ChevronDown size={s} strokeWidth={3.4} />;

const hydrology = [
  <T key="a"><Axes /><path d="M7 28c7 0 7-20 11-20s5 20 12 20z" fill="#10e8d8" stroke="#111" strokeWidth=".7" /><Tag t="D" x={31} y={8} /></T>,
  <T key="b"><path d="M4 13c0-6 5-6 12-6s12 0 12 6h-3c0-2-1-2-3-2H10c-2 0-3 0-3 2z" fill="#fff" stroke="#222" /><path d="M10 15v15M16 15v15M22 15v15" stroke="#3aa0e8" strokeDasharray="2 1.4" /></T>,
  <T key="c"><path d="M3 19l16 7 11-10-11-6z" fill="#7d7d10" stroke="#222" strokeWidth=".5" /><path d="M6 12L23 6l7 10-8 8z" fill="#8c8c18" /><path d="M6 12l17-6 7 10-7 8zM23 6v3" fill="none" stroke="#3060e0" /></T>,
  <Leaf key="d" fill="#7ec4f0" label="GSM" />,
  <Leaf key="e" fill="#fdf51c" label="SOCONT" />,
  <Leaf key="f" fill="#f57a3c" label="HBV" />,
  <Leaf key="g" fill="#1ee890" label="GR4J" />,
  <Leaf key="h" fill="#eeb400" label="SAC" />,
];
const river = [
  <RiverTile key="a" wing="#7d7d7d" label="LT" />,
  <RiverTile key="b" wing="#e0aa10" label="KW" />,
  <RiverTile key="c" wing="#4a7a18" label="MC" />,
  <RiverTile key="d" wing="#c02a2a" label="SV" />,
];
const standard = [<Junction key="a" />, <Sink key="b" />, <Tap key="c" />, <SeriesBox key="d" />, <FlowTile key="e" />, <TableTile key="f" />];
const infrastructure = [
  <Reservoir key="a" />, <Weir key="b" />,
  <Turbine key="c" fill="#22a8f0" line="#0a80d0" />,
  <Turbine key="d" fill="#f58220" line="#f58220" d />,
  <Bolt key="e" />, <Split key="f" />, <HouseTile key="g" />, <Basin key="h" />, <PlannerDrawing key="i" s={32} bg="#dcdcdc" />,
];

const Section: React.FC<{ title: string; items: React.ReactNode[] }> = ({ title, items }) => (
  <>
    <SectionHead>
      <RoundButton><ChevUp /></RoundButton>
      <SectionTitle>{title}</SectionTitle>
    </SectionHead>
    <Tiles>
      {items.map((item, i) => <Tile key={i}>{item}</Tile>)}
    </Tiles>
  </>
);

const DateRow: React.FC<{ label: string; value: string }> = ({ label, value }) => (
  <SolverRow $h={24}>
    <RowLabel $w={70}>{label}</RowLabel>
    <DateBox>{value}</DateBox>
    <Spin>
      <SpinPart><Mini d="M3.5 0L7 4H0z" fill="#111" /></SpinPart>
      <SpinPart><Mini d="M0 0h7L3.5 4z" fill="#111" /></SpinPart>
    </Spin>
    <DropPart><Mini d="M0 0h7L3.5 4z" fill="#111" /></DropPart>
  </SolverRow>
);

const StepRow: React.FC<{ label: string }> = ({ label }) => (
  <SolverRow $h={22}>
    <RowLabel $w={105}>{label}</RowLabel>
    <NumberBox>600</NumberBox>
    <UnitSelect>
      sec
      <ChevronDown size={10} color="#888" />
    </UnitSelect>
  </SolverRow>
);

const App: React.FC = () => (
  <Window>
    <GlobalStyle />
    <TitleBar>
      <svg width="16" height="5" viewBox="0 0 16 5">
        <rect width="5" height="4" y="1" fill="#e00000" />
        <rect x="5" width="4" height="4" y="1" fill="#111" />
        <rect x="8" width="4" height="4" y="1" fill="#0000c0" />
        <rect x="12" width="4" height="4" y="0" fill="#007a00" />
      </svg>
      <AppName>RS MINERVE</AppName>
      <WindowControls>
        <svg width="11" height="11" viewBox="0 0 11 11"><path d="M0 5.5h11" stroke="#777" /></svg>
        <svg width="11" height="11" viewBox="0 0 11 11"><path d="M.5 2.5h8v8h-8zM2.5 2.5v-2h8v8h-2" fill="none" stroke="#777" /></svg>
        <svg width="12" height="12" viewBox="0 0 12 12"><path d="M1 1l10 10M11 1L1 11" stroke="#777" /></svg>
      </WindowControls>
    </TitleBar>

    <TabStrip>
      <FileButton>File <Mini d="M0 0h7L3.5 4z" fill="#fff" /></FileButton>
      <Tab $active $w={102} $ml={4}><FlowMark w={14} h={14} />Model New</Tab>
      <Tab $w={103}>
        <svg width="12" height="14" viewBox="0 0 12 14"><rect x="1" y="1" width="10" height="12" rx="2" fill="#d5d5d5" stroke="#bbb" /><path d="M4 1v12M8 1v12" stroke="#bbb" /></svg>
        Database
      </Tab>
      <Tab $w={66}><Globe s={14} />GIS</Tab>
    </TabStrip>

    <Ribbon>
      <Group $w={328}>
        <GroupBody>
          <Large $w={44}><LargeIcon><FolderLarge /></LargeIcon>Open<Caret /></Large>
          <Large $w={46}><LargeIcon><PageLarge /></LargeIcon>New</Large>
          <SmallColumn $w={88} $ml={2}>
            <Small><Floppy />Save</Small>
            <Small><FloppyPen />Save as</Small>
            <Small><Picture />Background</Small>
          </SmallColumn>
          <SmallColumn $w={100}>
            <Small><FlowMark badge="#6aa84f" />Import</Small>
            <Small><FlowMark badge="#5ba3d0" />Export</Small>
            <Small><ImagePage />Save as image</Small>
          </SmallColumn>
          <Large $w={42} $off><LargeIcon><BackCircle /></LargeIcon>Back</Large>
        </GroupBody>
        <GroupLabel>Model</GroupLabel>
      </Group>

      <Group $w={205}>
        <GroupBody>
          <Large $w={40} $ml={10} $off><LargeIcon><Pointer /></LargeIcon>Select</Large>
          <SmallColumn $w={93} $ml={5}>
            <Small><Connections />Connections</Small>
            <Small $off><Transitions />Transitions</Small>
            <Small><DeleteX />Delete</Small>
          </SmallColumn>
          <SmallColumn $w={50}>
            <Small><Scissors />Cut</Small>
            <Small><CopyPages />Copy</Small>
            <Small><PasteBoard />Paste</Small>
          </SmallColumn>
        </GroupBody>
        <GroupLabel>Editing tools</GroupLabel>
      </Group>

      <Group $w={347}>
        <GroupBody>
          <Large $w={62} $ml={8}><LargeIcon><Sliders paper /></LargeIcon>Parameters</Large>
          <SmallColumn $w={74} $ml={5}>
            <Small><Sliders s={17} badge="#6aa84f" />Import P</Small>
            <Small><Sliders s={17} badge="#5ba3d0" />Export P</Small>
          </SmallColumn>
          <Large $w={62} $ml={-4}><LargeIcon><AxisChart red /></LargeIcon>Initial<br />conditions</Large>
          <SmallColumn $w={75} $ml={3}>
            <Small><AxisChart s={17} badge="#6aa84f" />Import IC</Small>
            <Small><AxisChart s={17} red badge="#5ba3d0" />Export IC</Small>
          </SmallColumn>
          <Large $w={56}><LargeIcon><ConverterArrows /></LargeIcon>Converter</Large>
        </GroupBody>
        <GroupLabel>Model Properties</GroupLabel>
      </Group>

      <Group $w={76}>
        <GroupBody>
          <SmallColumn $w={66} $ml={10}>
            <Small><FolderDb />Open</Small>
            <Small $off><DbBadge color="#a5cf90" />Import</Small>
            <Small $off><DbBadge color="#9cc9e6" />Export</Small>
          </SmallColumn>
        </GroupBody>
        <GroupLabel>Database</GroupLabel>
      </Group>

      <Group $w={107}>
        <GroupBody>
          <SmallColumn $w={96} $ml={11}>
            <Small><Cross />Add Layers</Small>
            <Small><Globe s={17} />Show Object</Small>
          </SmallColumn>
        </GroupBody>
        <GroupLabel>GIS</GroupLabel>
      </Group>

      <Group $w={163}>
        <GroupBody>
          <Large $w={56} $ml={7}><LargeIcon><Graph /></LargeIcon>Selection<br />and plots</Large>
          <Large $w={40} $ml={5}><LargeIcon><Puzzle /></LargeIcon>Expert<Caret /></Large>
          <Large $w={44} $ml={4}><LargeIcon><PluginBall /></LargeIcon>Plugins<Caret /></Large>
        </GroupBody>
        <GroupLabel>Modules</GroupLabel>
      </Group>

      <Group $w={58}>
        <GroupBody>
          <Large $w={58} $ml={2}><LargeIcon><Gears /></LargeIcon>Edit</Large>
        </GroupBody>
        <GroupLabel>Settings</GroupLabel>
      </Group>

      <Group $w={58}>
        <GroupBody>
          <Large $w={58} $ml={1}><LargeIcon><HelpBall /></LargeIcon>Help</Large>
        </GroupBody>
        <GroupLabel>Help</GroupLabel>
      </Group>
    </Ribbon>

    <Main>
      <Rail>
        <RoundButton><ChevronLeft size={13} strokeWidth={3.2} /></RoundButton>
      </Rail>

      <LeftPanel>
        <Section title="Hydrology" items={hydrology} />
        <Section title="River" items={river} />
        <Section title="Standard" items={standard} />
        <Section title="Infrastructure" items={infrastructure} />
        <SectionHead>
          <RoundButton><ChevUp /></RoundButton>
          <SectionTitle>Solver</SectionTitle>
        </SectionHead>
        <DateRow label="Start :" value="18/10/2016 00:00:00" />
        <DateRow label="End :" value="19/10/2016 00:00:00" />
        <StepRow label="Simulation time step" />
        <StepRow label="Recording time step:" />
        <SolverButtons>
          <SolverButton $w={112}>Validation</SolverButton>
          <SolverButton $w={111}>Start</SolverButton>
        </SolverButtons>
      </LeftPanel>
      <Splitter />

      <CanvasColumn>
        <CanvasRow>
          <Canvas>
            <ZoomButton $top={15}>
              <svg width="10" height="10" viewBox="0 0 10 10"><path d="M5 0v10M0 5h10" stroke="#fff" strokeWidth="2" /></svg>
            </ZoomButton>
            <ZoomButton $top={42}>
              <svg width="10" height="10" viewBox="0 0 10 10"><path d="M0 5h10" stroke="#fff" strokeWidth="2" /></svg>
            </ZoomButton>
            <NodeFrame>
              <NodeInner><PlannerDrawing s={120} /></NodeInner>
            </NodeFrame>
            <NodeLabel>Planner 1</NodeLabel>
          </Canvas>
          <VTrack $gutter={3}>
            <BarArrow><ChevronUp size={12} /></BarArrow>
            <VThumb $top={89} $h={155} />
            <BarArrow $end><ChevronDown size={12} /></BarArrow>
          </VTrack>
        </CanvasRow>
        <HTrack>
          <BarArrow><ChevronLeft size={12} /></BarArrow>
          <HThumb $left={134} $w={194} />
          <HEndArrow><ChevronRight size={12} /></HEndArrow>
        </HTrack>
      </CanvasColumn>

      <RightPanel>
        <PanelTop>
          <SearchRow><SearchLabel>Search:</SearchLabel><SearchInput /></SearchRow>
          <NewLabel>New</NewLabel>
        </PanelTop>
        <PanelBody>
          <PanelScroll>
            <PanelHead $gap={6}>
              <RoundButton><ChevUp /></RoundButton>
              Planner
              <svg width="8" height="16" viewBox="0 0 8 16"><path d="M1.5 1h5L5 10H3z" fill="#f58a3c" /><circle cx="4" cy="13.5" r="1.8" fill="#f58a3c" /></svg>
            </PanelHead>
            <InfoLine $mt={17}>Planner 1&nbsp;&nbsp;(264, 166)</InfoLine>
            <InfoLine $mt={8} $ml={10}>Zone:<ZoneBox>(no zone)</ZoneBox></InfoLine>
            <InfoLine $mt={4} $ml={10}>
              <InputsIcon width="12" height="13" viewBox="0 0 12 13"><path d="M3 3h5a4 4 0 1 1-6 4" fill="none" stroke="#2a78c8" strokeWidth="2" /><path d="M5 0v6L1 3z" fill="#2a78c8" /></InputsIcon>
              <InputsLabel>Inputs:</InputsLabel>
              <InputsValue>None - Input1 (-) / None - Input2 (-) / None - Input3 (-)</InputsValue>
            </InfoLine>
            <InfoLine $mt={5} $ml={10}>Outputs:&nbsp;&nbsp;Flow - QDown1 (m3/s)</InfoLine>
            <PanelHead $mt={23} $gap={3}><RoundButton><ChevDown /></RoundButton>Outputs</PanelHead>
            <PanelHead $mt={13} $gap={3}><RoundButton><ChevDown /></RoundButton>Series</PanelHead>
            <PanelHead $mt={13} $gap={3}><RoundButton><ChevUp /></RoundButton>Rules</PanelHead>
            <TableRow>
              <Grid $w={224}>
                <GridRow $h={24} $head $cols="42px 100px 1fr">
                  <HeadCell>Name</HeadCell><HeadCell>Condition</HeadCell><HeadCell>Time</HeadCell>
                </GridRow>
                <GridRow $h={19} $cols="42px 100px 1fr">
                  <DataCell>Rule1</DataCell><DataCell>Condition1</DataCell><DataCell>Anytime</DataCell>
                </GridRow>
                <GridRow $h={19} $cols="42px 100px 1fr">
                  <DataCell /><DataCell /><DataCell />
                </GridRow>
                <HTrack $h={17}>
                  <BarArrow><ChevronLeft size={11} /></BarArrow>
                  <HThumb $left={0} $w={100} />
                  <HEndArrow><ChevronRight size={11} /></HEndArrow>
                </HTrack>
              </Grid>
              <MoveButtons>
                <MoveButton><ChevUp s={11} /></MoveButton>
                <MoveButton><ChevDown s={11} /></MoveButton>
              </MoveButtons>
            </TableRow>
            <Caption>In the order of computation (from first to last one)</Caption>
            <FieldSet>
              <Legend>Rule1 Info</Legend>
              <PanelHead $mt={11} $gap={3}><RoundButton><ChevUp /></RoundButton>Conditions</PanelHead>
              <ConditionTable>
                <Grid $w={208} $thick>
                  <GridRow $h={24} $head $cols="65px 72px 1fr">
                    <HeadCell>Name</HeadCell><HeadCell>Description</HeadCell><HeadCell />
                  </GridRow>
                  <GridRow $h={19} $cols="65px 72px 1fr">
                    <DataCell>Condition1</DataCell><DataCell>Not Defined</DataCell><DataCell />
                  </GridRow>
                  <GridRow $h={19} $cols="65px 72px 1fr">
                    <DataCell /><DataCell /><DataCell />
                  </GridRow>
                </Grid>
              </ConditionTable>
              <ClippedTitle>Condition 1 Info</ClippedTitle>
            </FieldSet>
          </PanelScroll>
          <VTrack>
            <BarArrow><ChevronUp size={12} /></BarArrow>
            <VThumb $top={1} $h={241} />
            <BarArrow $end><ChevronDown size={12} /></BarArrow>
          </VTrack>
        </PanelBody>
      </RightPanel>

      <Rail>
        <RoundButton><ChevronRight size={13} strokeWidth={3.2} /></RoundButton>
      </Rail>
    </Main>

    <StatusBar>Ready</StatusBar>
  </Window>
);

export default App;
